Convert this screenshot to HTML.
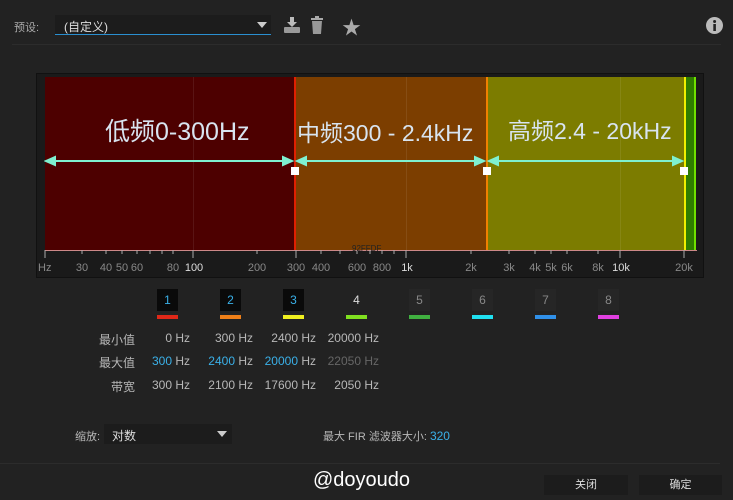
<!DOCTYPE html>
<html><head><meta charset="utf-8"><style>
*{margin:0;padding:0;box-sizing:border-box}
body{width:733px;height:500px;background:#222222;font-family:"Liberation Sans","Noto Sans CJK SC",sans-serif;color:#b8b8b8;position:relative;overflow:hidden;font-size:12px}
.a{position:absolute}
.t{position:absolute;white-space:nowrap}
.ch{position:absolute;top:289px;width:21px;height:22px;background:#0a0a0a;text-align:center;line-height:22px;font-size:12px}
.bar{position:absolute;top:315px;width:21px;height:4px}
.tick{position:absolute;top:262px;font-size:11px;color:#888;transform:translateX(-50%)}
.r{text-align:right}
</style></head><body>
<div class="t" style="left:14px;top:19px;font-size:11px;color:#aaa">预设:</div>
<div class="a" style="left:55px;top:15px;width:216px;height:20px;background:#1c1c1c;border-bottom:1px solid #2a8fd0"></div>
<div class="t" style="left:64px;top:18px;font-size:12px;color:#ddd">(自定义)</div>
<div class="a" style="left:257px;top:22px;width:0;height:0;border-left:5px solid transparent;border-right:5px solid transparent;border-top:6px solid #ccc"></div>
<svg class="a" style="left:283px;top:16px" width="18" height="18" viewBox="0 0 18 18"><path d="M7 1h4v5h3l-5 5-5-5h3z" fill="#bbb"/><rect x="1" y="11" width="16" height="6" rx="1" fill="#999"/></svg>
<svg class="a" style="left:310px;top:16px" width="14" height="18" viewBox="0 0 14 18"><rect x="1" y="2" width="12" height="2" fill="#aaa"/><rect x="5" y="0" width="4" height="2" fill="#aaa"/><path d="M2 5h10l-1 13H3z" fill="#999"/></svg>
<div class="t" style="left:342px;top:13px;font-size:19px;color:#aaa">★</div>
<svg class="a" style="left:706px;top:17px" width="17" height="17"><circle cx="8.5" cy="8.5" r="8.5" fill="#bbb"/><rect x="7.3" y="7" width="2.6" height="7" fill="#222"/><circle cx="8.6" cy="4.5" r="1.5" fill="#222"/></svg>
<div class="a" style="left:12px;top:44px;width:709px;height:1px;background:#2c2c2c"></div>

<div class="a" style="left:36px;top:73px;width:668px;height:205px;background:#1a1a1a;border:1px solid #111"></div>
<div class="a" style="left:45px;top:77px;width:250px;height:173px;background:#4d0000"></div>
<div class="a" style="left:295px;top:77px;width:192px;height:173px;background:#7c3e00"></div>
<div class="a" style="left:487px;top:77px;width:197px;height:173px;background:#7c7c00"></div>
<div class="a" style="left:686px;top:77px;width:8px;height:173px;background:#2f7c00"></div>
<div class="a" style="left:294px;top:77px;width:2px;height:173px;background:#e02000"></div>
<div class="a" style="left:486px;top:77px;width:2px;height:173px;background:#f08000"></div>
<div class="a" style="left:684px;top:77px;width:2px;height:173px;background:#f0f000"></div>
<div class="a" style="left:694px;top:77px;width:2px;height:173px;background:#70e000"></div>
<div class="a" style="left:193px;top:77px;width:1px;height:173px;background:rgba(255,255,255,.08)"></div>
<div class="a" style="left:406px;top:77px;width:1px;height:173px;background:rgba(255,255,255,.08)"></div>
<div class="a" style="left:620px;top:77px;width:1px;height:173px;background:rgba(255,255,255,.08)"></div>
<div class="a" style="left:45px;top:250px;width:652px;height:1px;background:#c88"></div>
<svg class="a" style="left:44px;top:250px" width="654" height="10">
<g stroke="#aaa" stroke-width="1">
<line x1="1" y1="0" x2="1" y2="8"/><line x1="38" y1="0" x2="38" y2="4"/><line x1="62" y1="0" x2="62" y2="4"/><line x1="78" y1="0" x2="78" y2="4"/><line x1="93" y1="0" x2="93" y2="4"/><line x1="106" y1="0" x2="106" y2="4"/><line x1="118" y1="0" x2="118" y2="4"/><line x1="129" y1="0" x2="129" y2="4"/><line x1="149" y1="0" x2="149" y2="8"/><line x1="213" y1="0" x2="213" y2="4"/><line x1="252" y1="0" x2="252" y2="8"/><line x1="277" y1="0" x2="277" y2="4"/><line x1="296" y1="0" x2="296" y2="4"/><line x1="313" y1="0" x2="313" y2="4"/><line x1="326" y1="0" x2="326" y2="4"/><line x1="338" y1="0" x2="338" y2="4"/><line x1="350" y1="0" x2="350" y2="4"/><line x1="362" y1="0" x2="362" y2="8"/><line x1="427" y1="0" x2="427" y2="4"/><line x1="465" y1="0" x2="465" y2="4"/><line x1="491" y1="0" x2="491" y2="4"/><line x1="507" y1="0" x2="507" y2="4"/><line x1="523" y1="0" x2="523" y2="4"/><line x1="554" y1="0" x2="554" y2="4"/><line x1="576" y1="0" x2="576" y2="8"/><line x1="640" y1="0" x2="640" y2="8"/>
</g></svg>
<div class="t" style="left:352px;top:244px;font-size:8px;color:#222">92FFDF</div>
<div class="tick" style="transform:none;left:38px">Hz</div>
<div class="tick" style="left:82px">30</div><div class="tick" style="left:106px">40</div><div class="tick" style="left:122px">50</div><div class="tick" style="left:137px">60</div><div class="tick" style="left:173px">80</div><div class="tick" style="left:194px;color:#ddd">100</div><div class="tick" style="left:257px">200</div><div class="tick" style="left:296px">300</div><div class="tick" style="left:321px">400</div><div class="tick" style="left:357px">600</div><div class="tick" style="left:382px">800</div><div class="tick" style="left:407px;color:#ddd">1k</div><div class="tick" style="left:471px">2k</div><div class="tick" style="left:509px">3k</div><div class="tick" style="left:535px">4k</div><div class="tick" style="left:551px">5k</div><div class="tick" style="left:567px">6k</div><div class="tick" style="left:598px">8k</div><div class="tick" style="left:621px;color:#ddd">10k</div><div class="tick" style="left:684px">20k</div>

<div class="t" style="left:105px;top:112px;font-size:25px;color:#d8e4f0">低频0-300Hz</div>
<div class="t" style="left:297px;top:114px;font-size:23px;color:#d8e4f0">中频300 - 2.4kHz</div>
<div class="t" style="left:508px;top:112px;font-size:23px;color:#d8e4f0">高频2.4 - 20kHz</div>
<svg class="a" style="left:44px;top:153px" width="650" height="25">
<g stroke="#7ff0d0" stroke-width="2" fill="#7ff0d0">
<line x1="4" y1="8" x2="246" y2="8"/><path d="M2 8l9-4v8z"/><path d="M248 8l-9-4v8z"/>
<line x1="256" y1="8" x2="438" y2="8"/><path d="M253 8l9-4v8z"/><path d="M440 8l-9-4v8z"/>
<line x1="448" y1="8" x2="636" y2="8"/><path d="M445 8l9-4v8z"/><path d="M638 8l-9-4v8z"/>
</g>
<rect x="247" y="14" width="8" height="8" fill="#fff"/><rect x="439" y="14" width="8" height="8" fill="#fff"/><rect x="636" y="14" width="8" height="8" fill="#fff"/>
</svg>

<div class="ch" style="left:157px;color:#3ab0e8">1</div><div class="bar" style="left:157px;background:#e02818"></div>
<div class="ch" style="left:220px;color:#3ab0e8">2</div><div class="bar" style="left:220px;background:#f08018"></div>
<div class="ch" style="left:283px;color:#3ab0e8">3</div><div class="bar" style="left:283px;background:#f0f020"></div>
<div class="ch" style="left:346px;color:#ddd;background:#222">4</div><div class="bar" style="left:346px;background:#80e020"></div>
<div class="ch" style="left:409px;color:#888;background:#262626">5</div><div class="bar" style="left:409px;background:#40b040"></div>
<div class="ch" style="left:472px;color:#888;background:#262626">6</div><div class="bar" style="left:472px;background:#20e0f0"></div>
<div class="ch" style="left:535px;color:#888;background:#262626">7</div><div class="bar" style="left:535px;background:#3090e8"></div>
<div class="ch" style="left:598px;color:#888;background:#262626">8</div><div class="bar" style="left:598px;background:#e040e0"></div>

<div class="t r" style="left:80px;width:55px;top:331px">最小值</div>
<div class="t r" style="left:80px;width:55px;top:354px">最大值</div>
<div class="t r" style="left:80px;width:55px;top:378px">带宽</div>
<div class="t r" style="left:130px;width:60px;top:331px">0 Hz</div>
<div class="t r" style="left:193px;width:60px;top:331px">300 Hz</div>
<div class="t r" style="left:256px;width:60px;top:331px">2400 Hz</div>
<div class="t r" style="left:319px;width:60px;top:331px">20000 Hz</div>
<div class="t r" style="left:130px;width:60px;top:354px"><span style="color:#3ab0e8">300</span> Hz</div>
<div class="t r" style="left:193px;width:60px;top:354px"><span style="color:#3ab0e8">2400</span> Hz</div>
<div class="t r" style="left:256px;width:60px;top:354px"><span style="color:#3ab0e8">20000</span> Hz</div>
<div class="t r" style="left:319px;width:60px;top:354px;color:#666">22050 Hz</div>
<div class="t r" style="left:130px;width:60px;top:378px">300 Hz</div>
<div class="t r" style="left:193px;width:60px;top:378px">2100 Hz</div>
<div class="t r" style="left:256px;width:60px;top:378px">17600 Hz</div>
<div class="t r" style="left:319px;width:60px;top:378px">2050 Hz</div>

<div class="t" style="left:75px;top:428px;font-size:11px">缩放:</div>
<div class="a" style="left:104px;top:424px;width:128px;height:20px;background:#1c1c1c"></div>
<div class="t" style="left:112px;top:427px;color:#ddd">对数</div>
<div class="a" style="left:217px;top:431px;width:0;height:0;border-left:5px solid transparent;border-right:5px solid transparent;border-top:6px solid #ccc"></div>
<div class="t" style="left:323px;top:428px;font-size:11px">最大 FIR 滤波器大小: <span style="color:#3ab0e8;font-size:12px">320</span></div>

<div class="a" style="left:0;top:463px;width:720px;height:1px;background:#2c2c2c"></div>
<div class="t" style="left:313px;top:469px;font-size:20px;color:#fff">@doyoudo</div>
<div class="a" style="left:544px;top:475px;width:84px;height:20px;background:#1c1c1c;color:#ddd;text-align:center;line-height:20px;font-size:11px">关闭</div>
<div class="a" style="left:639px;top:475px;width:83px;height:20px;background:#1c1c1c;color:#ddd;text-align:center;line-height:20px;font-size:11px">确定</div>
</body></html>
